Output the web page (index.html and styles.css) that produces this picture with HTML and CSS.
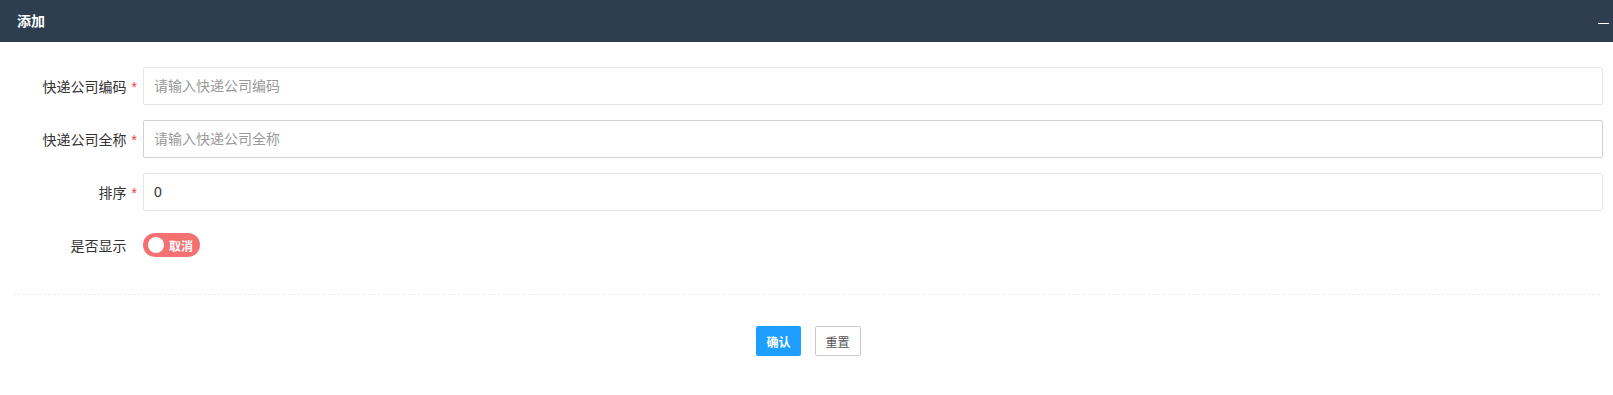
FILE: index.html
```html
<!DOCTYPE html>
<html lang="zh-CN">
<head>
    <meta charset="UTF-8">
    <title>添加</title>
    <link rel="stylesheet" href="styles.css">
</head>
<body>
    <div class="layer">
        <div class="layer-title">
            <span>添加</span>
            <span class="layer-min"></span>
        </div>
        <form class="form">
            <div class="form-item">
                <label class="form-label">快递公司编码<span class="req">*</span></label>
                <input class="form-input" type="text" placeholder="请输入快递公司编码">
            </div>
            <div class="form-item">
                <label class="form-label">快递公司全称<span class="req">*</span></label>
                <input class="form-input is-hover" type="text" placeholder="请输入快递公司全称">
            </div>
            <div class="form-item">
                <label class="form-label">排序<span class="req">*</span></label>
                <input class="form-input" type="text" value="0">
            </div>
            <div class="form-item">
                <label class="form-label">是否显示<span class="req blank">*</span></label>
                <div class="switch">
                    <i class="switch-knob"></i>
                    <em>取消</em>
                </div>
            </div>
            <div class="divider"></div>
            <div class="btn-row">
                <button type="button" class="btn btn-primary">确认</button>
                <button type="button" class="btn btn-plain">重置</button>
            </div>
        </form>
    </div>
</body>
</html>
```

FILE: styles.css
```css
body {
    margin: 0;
    padding: 0;
    background: #fff;
    font-family: "Helvetica Neue", Helvetica, "Liberation Sans", "Noto Sans CJK SC", sans-serif;
    color: #333;
}

.layer-title {
    height: 42px;
    line-height: 42px;
    background-color: #2e3e50;
    color: #fff;
    font-size: 14px;
    font-weight: bold;
    padding-left: 17px;
    position: relative;
}

.layer-min {
    position: absolute;
    right: 4px;
    top: 23px;
    width: 11px;
    height: 1px;
    background: #fff;
}

.form {
    padding: 25px 10px 0 0;
}

.form-item {
    display: flex;
    align-items: center;
    height: 38px;
    margin-bottom: 15px;
}

.form-label {
    width: 143px;
    box-sizing: border-box;
    padding-right: 6px;
    text-align: right;
    font-size: 14px;
    color: #333;
    flex-shrink: 0;
}

.req {
    color: #f33;
    margin-left: 5px;
}

.req.blank {
    visibility: hidden;
}

.form-input {
    flex: 1;
    height: 38px;
    box-sizing: border-box;
    border: 1px solid #e6e6e6;
    border-radius: 2px;
    padding: 0 10px;
    font-size: 14px;
    color: #333;
    font-family: inherit;
    outline: none;
}

.form-input::placeholder {
    color: #999;
}

.form-input.is-hover {
    border-color: #d2d2d2;
}

.switch {
    display: flex;
    align-items: center;
    height: 24px;
    width: 57px;
    box-sizing: border-box;
    border-radius: 12px;
    background: #f47171;
    padding: 0 7px 0 5px;
}

.switch-knob {
    width: 16px;
    height: 16px;
    border-radius: 50%;
    background: #fff;
}

.switch em {
    font-style: normal;
    color: #fff;
    font-size: 12px;
    font-weight: bold;
    margin-left: 5px;
}

.divider {
    margin: 30px 3px 0 13px;
    border-top: 1px dashed #eee;
}

.btn-row {
    display: flex;
    justify-content: center;
    gap: 14px;
    padding: 31px 0 0 14px;
}

.btn {
    height: 30px;
    padding: 0 10px;
    font-size: 12px;
    border-radius: 2px;
    font-family: inherit;
    cursor: pointer;
}

.btn-primary {
    background: #1e9fff;
    border: none;
    color: #fff;
    font-weight: bold;
}

.btn-plain {
    background: #fff;
    border: 1px solid #c9c9c9;
    color: #555;
}
```
